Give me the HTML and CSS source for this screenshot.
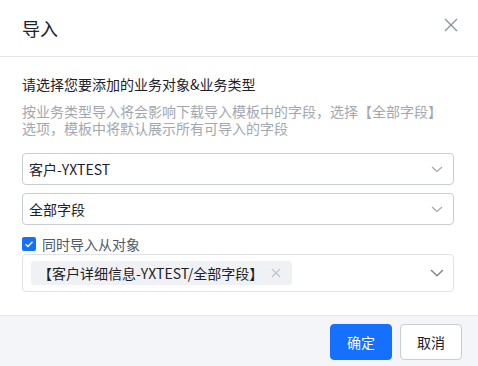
FILE: index.html
```html
<!DOCTYPE html>
<html lang="zh-CN">
<head>
<meta charset="utf-8">
<title>导入</title>
<link rel="stylesheet" href="styles.css">
</head>
<body>
<div class="dialog">
  <div class="header">
    <div class="title">导入</div>
    <svg class="close" width="14" height="14" viewBox="0 0 14 14"><path d="M1 1L13 13M13 1L1 13" stroke="#86909c" stroke-width="1.3" fill="none"/></svg>
  </div>
  <div class="body">
    <div class="lead">请选择您要添加的业务对象&amp;业务类型</div>
    <div class="desc">按业务类型导入将会影响下载导入模板中的字段，选择【全部字段】选项，模板中将默认展示所有可导入的字段</div>
    <div class="select first">
      <span class="value">客户-YXTEST</span>
      <svg class="chev" width="12" height="7" viewBox="0 0 12 7"><path d="M1 1L6 5.5L11 1" stroke="#a2a7b0" stroke-width="1.2" fill="none"/></svg>
    </div>
    <div class="select">
      <span class="value">全部字段</span>
      <svg class="chev" width="12" height="7" viewBox="0 0 12 7"><path d="M1 1L6 5.5L11 1" stroke="#a2a7b0" stroke-width="1.2" fill="none"/></svg>
    </div>
    <label class="check-row">
      <span class="checkbox"><svg width="14" height="14" viewBox="0 0 14 14"><path d="M3.5 7.2L6 9.5L10.5 4.8" stroke="#fff" stroke-width="1.4" fill="none"/></svg></span>
      <span class="check-label">同时导入从对象</span>
    </label>
    <div class="multi">
      <span class="tag">【客户详细信息-YXTEST/全部字段】<svg class="tag-x" width="10" height="10" viewBox="0 0 10 10"><path d="M1 1L9 9M9 1L1 9" stroke="#c2c6cc" stroke-width="1.2" fill="none"/></svg></span>
      <svg class="chev big" width="14" height="8" viewBox="0 0 14 8"><path d="M1 1L7 6.8L13 1" stroke="#7d8592" stroke-width="1.4" fill="none"/></svg>
    </div>
  </div>
  <div class="footer">
    <button class="btn primary">确定</button>
    <button class="btn">取消</button>
  </div>
</div>
</body>
</html>
```
FILE: styles.css
```css
* { box-sizing: border-box; }
html, body { margin: 0; padding: 0; background: #fff; }
body {
  font-family: "Noto Sans CJK SC", "Noto Sans", sans-serif;
  font-size: 14px;
  color: #1d2129;
}
.dialog { width: 478px; }
.header {
  height: 57px;
  border-bottom: 1px solid #e5e6eb;
  display: flex;
  align-items: center;
  justify-content: space-between;
  padding: 0 20px 2px 22px;
}
.title { font-size: 18px; line-height: 24px; color: #1d2129; margin-top: 1px; }
.close { display: block; margin-top: -4px; }
.body { padding: 16px 24px 23px 22px; }
.lead { line-height: 22px; }
.desc { margin-top: 8px; line-height: 17px; color: #a2a7af; }
.select {
  margin-top: 8px;
  height: 32px;
  border: 1px solid #c9cdd4;
  border-radius: 4px;
  display: flex;
  align-items: center;
  justify-content: space-between;
  padding: 0 10px 0 6px;
}
.select.first { margin-top: 16px; }
.value { line-height: 20px; }
.chev { display: block; }
.check-row {
  margin-top: 8px;
  height: 21px;
  display: flex;
  align-items: center;
  gap: 6px;
}
.checkbox {
  width: 14px; height: 14px;
  background: #1570ff;
  border-radius: 2px;
  display: block;
}
.checkbox svg { display: block; }
.check-label { line-height: 20px; color: #4e5969; }
.multi {
  height: 38px;
  border: 1px solid #e1e3e8;
  border-radius: 4px;
  display: flex;
  align-items: center;
  justify-content: space-between;
  padding: 0 9px 0 8px;
}
.tag {
  height: 24px;
  background: #f0f1f4;
  border-radius: 3px;
  display: flex;
  align-items: center;
  padding: 0 11px 0 7px;
  gap: 8px;
  color: #1d2129;
}
.tag-x { display: block; }
.footer {
  border-top: 1px solid #e5e6eb;
  background: #f4f5f8;
  display: flex;
  justify-content: flex-end;
  gap: 8px;
  padding: 8px 16px 8px 0;
}
.btn {
  width: 62px; height: 36px;
  border: 1px solid #c9cdd4;
  border-radius: 4px;
  background: #fff;
  font-family: inherit;
  font-size: 14px;
  color: #1d2129;
  padding: 0;
}
.btn.primary { background: #1570ff; border-color: #1570ff; color: #fff; }
```
